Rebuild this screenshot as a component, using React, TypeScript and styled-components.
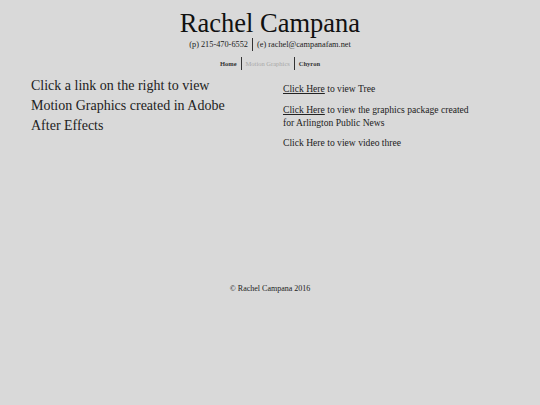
import styled, { createGlobalStyle } from 'styled-components';

const GlobalStyle = createGlobalStyle`
    html, body {
        margin: 0;
        padding: 0;
        background: #d9d9d9;
        font-family: "Liberation Serif", "DejaVu Serif", serif;
        color: #222;
    }
`;

const Page = styled.div`
    width: 540px;
    height: 405px;
    background: #d9d9d9;
`;

const Header = styled.header`
    display: flex;
    flex-direction: column;
    align-items: center;
    padding-top: 7px;
`;

const Title = styled.h1`
    margin: 0;
    font-size: 26.5px;
    font-weight: normal;
    line-height: 32px;
    color: #111;
`;

const Contact = styled.div`
    display: flex;
    align-items: center;
    margin-top: -1px;
    font-size: 8.3px;
    color: #222;
`;

const Divider = styled.span<{ $height: number }>`
    display: inline-block;
    width: 1px;
    height: ${props => props.$height}px;
    background: #333;
    margin: 0 4px;
`;

const Nav = styled.nav`
    display: flex;
    align-items: center;
    margin-top: 6px;
    font-size: 6.5px;
    font-weight: bold;
`;

const NavItem = styled.a<{ $active?: boolean }>`
    color: ${props => (props.$active ? '#a8a8a8' : '#333')};
    font-weight: ${props => (props.$active ? 'normal' : 'bold')};
    text-decoration: none;
`;

const Content = styled.main`
    display: flex;
    align-items: flex-start;
    padding: 6px 31px 0;
`;

const Intro = styled.div`
    width: 216px;
    margin-right: 36px;
    font-size: 14px;
    line-height: 20px;
    color: #222;
`;

const Links = styled.div`
    padding-top: 6px;
    width: 188px;
    font-size: 9.6px;
    line-height: 13px;
    color: #222;
`;

const LinkRow = styled.p`
    margin: 0 0 7.5px;
`;

const Underlined = styled.a`
    color: #222;
    text-decoration: underline;
`;

const Footer = styled.footer`
    margin-top: 127px;
    text-align: center;
    font-size: 8px;
    line-height: 9px;
    color: #222;
`;

const App: React.FC = () => {
    return (
        <Page>
            <GlobalStyle />
            <Header>
                <Title>Rachel Campana</Title>
                <Contact>
                    <span>(p) 215-470-6552</span>
                    <Divider $height={13} />
                    <span>(e) rachel@campanafam.net</span>
                </Contact>
                <Nav>
                    <NavItem>Home</NavItem>
                    <Divider $height={13} />
                    <NavItem $active>Motion Graphics</NavItem>
                    <Divider $height={13} />
                    <NavItem>Chyron</NavItem>
                </Nav>
            </Header>
            <Content>
                <Intro>Click a link on the right to view Motion Graphics created in Adobe After Effects</Intro>
                <Links>
                    <LinkRow>
                        <Underlined>Click Here</Underlined> to view Tree
                    </LinkRow>
                    <LinkRow>
                        <Underlined>Click Here</Underlined> to view the graphics package created for Arlington Public News
                    </LinkRow>
                    <LinkRow>Click Here to view video three</LinkRow>
                </Links>
            </Content>
            <Footer>© Rachel Campana 2016</Footer>
        </Page>
    );
};

export default App;
